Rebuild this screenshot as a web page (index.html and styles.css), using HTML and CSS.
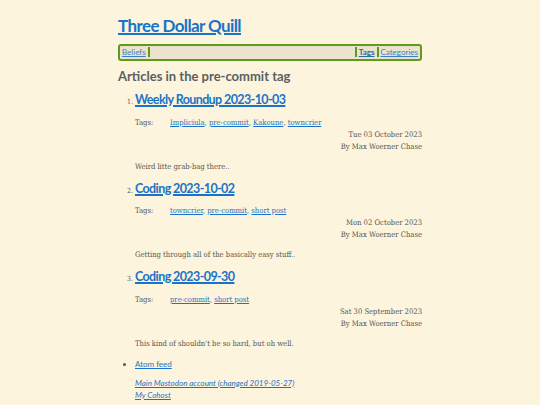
FILE: index.html
```html
<!DOCTYPE html>
<html lang="en">
<head>
<meta charset="utf-8">
<title>Three Dollar Quill</title>
<link rel="stylesheet" href="styles.css">
</head>
<body>
<div class="page">
  <h1 class="site-title"><a href="#">Three Dollar Quill</a></h1>
  <nav class="nav">
    <div class="nav-left"><a href="#">Beliefs</a></div>
    <div class="nav-right"><a href="#" class="current">Tags</a><a href="#">Categories</a></div>
  </nav>
  <h2 class="heading">Articles in the pre-commit tag</h2>
  <ol class="articles">
    <li class="article">
      <h3 class="article-title"><a href="#">Weekly Roundup 2023-10-03</a></h3>
      <div class="tags"><span class="tags-label">Tags:</span><span class="tags-list"><a href="#">Impliciula</a>, <a href="#">pre-commit</a>, <a href="#">Kakoune</a>, <a href="#">towncrier</a></span></div>
      <div class="meta">Tue 03 October 2023</div>
      <div class="meta">By Max Woerner Chase</div>
      <p class="summary">Weird litte grab-bag there..</p>
    </li>
    <li class="article">
      <h3 class="article-title"><a href="#">Coding 2023-10-02</a></h3>
      <div class="tags"><span class="tags-label">Tags:</span><span class="tags-list"><a href="#">towncrier</a>, <a href="#">pre-commit</a>, <a href="#">short post</a></span></div>
      <div class="meta">Mon 02 October 2023</div>
      <div class="meta">By Max Woerner Chase</div>
      <p class="summary">Getting through all of the basically easy stuff..</p>
    </li>
    <li class="article">
      <h3 class="article-title"><a href="#">Coding 2023-09-30</a></h3>
      <div class="tags"><span class="tags-label">Tags:</span><span class="tags-list"><a href="#">pre-commit</a>, <a href="#">short post</a></span></div>
      <div class="meta">Sat 30 September 2023</div>
      <div class="meta">By Max Woerner Chase</div>
      <p class="summary">This kind of shouldn't be so hard, but oh well.</p>
    </li>
  </ol>
  <ul class="feeds">
    <li><a href="#">Atom feed</a></li>
  </ul>
  <div class="social">
    <a href="#">Main Mastodon account (changed 2019-05-27)</a>
    <a href="#">My Cohost</a>
  </div>
</div>
</body>
</html>
```
FILE: styles.css
```css
html, body {
  margin: 0;
  padding: 0;
  background: #fcf4dc;
}
body {
  font-family: "DejaVu Serif Condensed", "DejaVu Serif", serif;
  font-stretch: condensed;
  color: #555;
  font-size: 7.6px;
}
a { color: #1a73c8; }
.page {
  width: 304px;
  margin: 0 auto;
}
.site-title {
  margin: 16px 0 0;
  font-family: Lato, "Open Sans", sans-serif;
  font-size: 17px;
  letter-spacing: -0.6px;
  line-height: 20px;
  font-weight: 700;
}
.site-title a { text-decoration-thickness: 2px; }
.nav {
  margin-top: 8px;
  height: 13px;
  border: 2px solid #5e9a1c;
  border-radius: 3px;
  background: #ebe3cd;
  display: flex;
  justify-content: space-between;
  align-items: stretch;
  font-family: Lato, "Open Sans", sans-serif;
  font-size: 8px;
  line-height: 13px;
}
.nav a {
  padding: 0 2px;
  color: #3f7fc0;
}
.nav-left a { border-right: 2px solid #5e9a1c; }
.nav-right a { border-left: 2px solid #5e9a1c; }
.nav a.current { font-weight: 700; color: #2a6aa8; }
.heading {
  margin: 7px 0 0;
  font-family: Lato, "Open Sans", sans-serif;
  font-size: 13px;
  line-height: 16px;
  font-weight: 700;
  color: #5a6064;
}
.articles {
  margin: 8px 0 0;
  padding-left: 17px;
}
.article { margin-bottom: 8px; font-size: 7px; }
.article::marker { color: #555; }
.article-title {
  margin: 0;
  display: inline-block;
  font-family: Lato, "Open Sans", sans-serif;
  font-size: 12.5px;
  letter-spacing: -0.6px;
  line-height: 16px;
  font-weight: 700;
}
.article-title a { text-decoration-thickness: 1.5px; }
.tags {
  margin-top: 8.5px;
  display: flex;
  line-height: 12px;
  font-size: 7.6px;
}
.tags-label { width: 35px; }
.meta {
  text-align: right;
  line-height: 12px;
  font-size: 7.6px;
}
.summary {
  margin: 8px 0 0;
  line-height: 12px;
  font-size: 7.6px;
}
.feeds {
  margin: 8px 0 0;
  padding-left: 17px;
  line-height: 12px;
  font-family: Lato, "Open Sans", sans-serif;
  font-size: 8px;
}
.social {
  margin-top: 7px;
  padding-left: 17px;
  display: flex;
  flex-direction: column;
  align-items: flex-start;
  font-family: Lato, "Open Sans", sans-serif;
  font-style: italic;
  font-size: 8px;
  line-height: 12px;
}
```
